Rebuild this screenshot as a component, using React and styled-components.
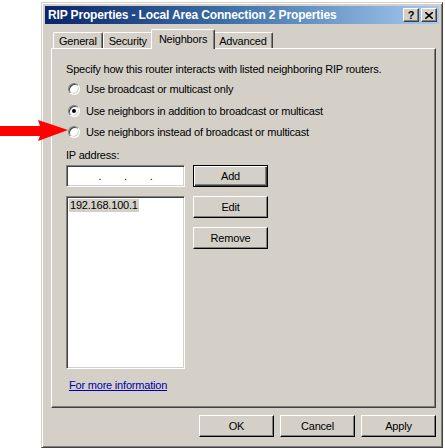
import React from 'react';
import styled, { createGlobalStyle } from 'styled-components';

const GlobalStyle = createGlobalStyle`
  html, body {
    margin: 0;
    padding: 0;
    background: #ffffff;
  }
  body {
    font-family: "Liberation Sans", Arial, sans-serif;
    font-size: 11px;
    letter-spacing: -0.2px;
    color: #000000;
  }
`;

const Page = styled.div`
  position: relative;
  width: 445px;
  height: 448px;
  overflow: hidden;
  padding: 2px 0 0 41px;
  box-sizing: border-box;
`;

const Window = styled.div`
  width: 402px;
  height: 446px;
  box-sizing: border-box;
  background: #d4d0c8;
  border-top: 1px solid #d4d0c8;
  border-left: 1px solid #d4d0c8;
  border-right: 1px solid #404040;
  border-bottom: 1px solid #404040;
  box-shadow: inset 1px 1px 0 #ffffff, inset -1px -1px 0 #808080;
  padding: 3px 3px 0 3px;
  display: flex;
  flex-direction: column;
`;

const TitleBar = styled.div`
  height: 18px;
  display: flex;
  align-items: center;
  justify-content: space-between;
  padding: 0 2px 0 3px;
  background: linear-gradient(90deg, #0a246a 0%, #3a6ea5 45%, #a6caf0 100%);
`;

const Title = styled.span`
  color: #ffffff;
  font-weight: bold;
  font-size: 12px;
  letter-spacing: -0.15px;
  white-space: nowrap;
`;

const TitleButtons = styled.div`
  display: flex;
  gap: 2px;
`;

const CaptionButton = styled.div`
  width: 16px;
  height: 14px;
  box-sizing: border-box;
  background: #d4d0c8;
  border-top: 1px solid #ffffff;
  border-left: 1px solid #ffffff;
  border-right: 1px solid #404040;
  border-bottom: 1px solid #404040;
  box-shadow: inset -1px -1px 0 #808080;
  display: flex;
  align-items: center;
  justify-content: center;
  font-weight: bold;
  font-size: 11px;
  line-height: 1;
`;

const Body = styled.div`
  padding: 5px 5px 0 6px;
  flex: 1;
  display: flex;
  flex-direction: column;
`;

const TabStrip = styled.div`
  display: flex;
  align-items: flex-end;
  height: 19px;
  padding-left: 2px;
  position: relative;
  z-index: 1;
`;

const Tab = styled.div`
  height: ${p => (p.$active ? '20px' : '16px')};
  margin-bottom: ${p => (p.$active ? '-1px' : '0')};
  margin-left: ${p => (p.$active ? '-2px' : '0')};
  margin-right: ${p => (p.$active ? '-2px' : '0')};
  padding: 0 ${p => (p.$active ? '7px' : '5px')};
  box-sizing: border-box;
  background: #d4d0c8;
  border-top: 1px solid #ffffff;
  border-left: 1px solid #ffffff;
  border-right: 1px solid #404040;
  box-shadow: inset -1px 0 0 #808080;
  border-radius: 2px 2px 0 0;
  display: flex;
  align-items: ${p => (p.$active ? 'flex-start' : 'center')};
  padding-top: ${p => (p.$active ? '3px' : '0')};
  white-space: nowrap;
  z-index: ${p => (p.$active ? 2 : 0)};
`;

const Panel = styled.div`
  width: 385px;
  height: 360px;
  box-sizing: border-box;
  border-top: 1px solid #ffffff;
  border-left: 1px solid #ffffff;
  border-right: 1px solid #404040;
  border-bottom: 1px solid #404040;
  box-shadow: inset -1px -1px 0 #808080;
  padding: 13px 14px 0 14px;
  display: flex;
  flex-direction: column;
`;

const Text = styled.div`
  line-height: 14px;
  white-space: nowrap;
`;

const Options = styled.div`
  display: flex;
  flex-direction: column;
  gap: 7.5px;
  margin-top: 6px;
  padding-left: 2px;
`;

const RadioRow = styled.label`
  display: flex;
  align-items: center;
  gap: 6px;
  height: 14px;
  white-space: nowrap;
`;

const RadioCircle = styled.span`
  width: 12px;
  height: 12px;
  box-sizing: border-box;
  border-radius: 50%;
  background: #ffffff;
  border: 1px solid;
  border-color: #808080 #ffffff #ffffff #808080;
  box-shadow: inset 1px 1px 0 #404040, inset -1px -1px 0 #d4d0c8;
  display: flex;
  align-items: center;
  justify-content: center;
  &::after {
    content: '';
    width: 4px;
    height: 4px;
    border-radius: 50%;
    background: ${p => (p.$checked ? '#000000' : 'transparent')};
  }
`;

const Label = styled(Text)`
  margin-top: 9px;
`;

const Grid = styled.div`
  display: grid;
  grid-template-columns: 119px 75px;
  column-gap: 8px;
  row-gap: 9px;
  margin-top: 3px;
  align-items: start;
`;

const Sunken = styled.div`
  box-sizing: border-box;
  background: #ffffff;
  border-top: 1px solid #808080;
  border-left: 1px solid #808080;
  border-right: 1px solid #ffffff;
  border-bottom: 1px solid #ffffff;
  box-shadow: inset 1px 1px 0 #404040, inset -1px -1px 0 #d4d0c8;
`;

const IpInput = styled(Sunken)`
  height: 22px;
  display: flex;
  align-items: center;
  justify-content: space-around;
  padding: 0 20px 0 20px;
`;

const ListBox = styled(Sunken)`
  height: 173px;
  padding: 2px;
  grid-row: span 3;
`;

const ListItem = styled.span`
  display: inline-block;
  background: #d4d0c8;
  line-height: 13px;
  padding: 0 1px;
`;

const ButtonColumn = styled.div`
  display: flex;
  flex-direction: column;
  gap: 9px;
`;

const Button = styled.div`
  width: 75px;
  height: 22px;
  box-sizing: border-box;
  background: #d4d0c8;
  border-top: 1px solid ${p => (p.$default ? '#000000' : '#ffffff')};
  border-left: 1px solid ${p => (p.$default ? '#000000' : '#ffffff')};
  border-right: 1px solid #000000;
  border-bottom: 1px solid #000000;
  box-shadow: ${p =>
    p.$default
      ? 'inset 1px 1px 0 #ffffff, inset -1px -1px 0 #404040, inset -2px -2px 0 #808080'
      : 'inset -1px -1px 0 #808080'};
  display: flex;
  align-items: center;
  justify-content: center;
`;

const Link = styled.a`
  color: #0000aa;
  text-decoration: underline;
  margin-top: auto;
  margin-bottom: 15px;
  margin-left: 3px;
  line-height: 14px;
  align-self: flex-start;
`;

const Footer = styled.div`
  display: flex;
  justify-content: flex-end;
  gap: 6px;
  padding: 7px 0 0 0;
  width: 385px;
`;

const Arrow = styled.svg`
  position: absolute;
  left: 0;
  top: 119px;
`;

export default function App() {
  return (
    <>
      <GlobalStyle />
      <Page>
        <Window>
          <TitleBar>
            <Title>RIP Properties - Local Area Connection 2 Properties</Title>
            <TitleButtons>
              <CaptionButton>?</CaptionButton>
              <CaptionButton>
                <svg width="8" height="7" viewBox="0 0 8 7">
                  <path d="M0 0 L8 7 M8 0 L0 7" stroke="#000" strokeWidth="1.6" />
                </svg>
              </CaptionButton>
            </TitleButtons>
          </TitleBar>
          <Body>
            <TabStrip>
              <Tab>General</Tab>
              <Tab>Security</Tab>
              <Tab $active>Neighbors</Tab>
              <Tab>Advanced</Tab>
            </TabStrip>
            <Panel>
              <Text>Specify how this router interacts with listed neighboring RIP routers.</Text>
              <Options>
                <RadioRow>
                  <RadioCircle />
                  Use broadcast or multicast only
                </RadioRow>
                <RadioRow>
                  <RadioCircle $checked />
                  Use neighbors in addition to broadcast or multicast
                </RadioRow>
                <RadioRow>
                  <RadioCircle />
                  Use neighbors instead of broadcast or multicast
                </RadioRow>
              </Options>
              <Label>IP address:</Label>
              <Grid>
                <IpInput>
                  <span>.</span>
                  <span>.</span>
                  <span>.</span>
                </IpInput>
                <Button $default>Add</Button>
                <ListBox>
                  <ListItem>192.168.100.1</ListItem>
                </ListBox>
                <ButtonColumn>
                  <Button>Edit</Button>
                  <Button>Remove</Button>
                </ButtonColumn>
              </Grid>
              <Link>For more information</Link>
            </Panel>
            <Footer>
              <Button>OK</Button>
              <Button>Cancel</Button>
              <Button>Apply</Button>
            </Footer>
          </Body>
        </Window>
        <Arrow width="70" height="24" viewBox="0 0 70 24">
          <polygon points="0,7 40,7 38,1 68,11 38,22 40,17 0,17" fill="#ff0000" />
        </Arrow>
      </Page>
    </>
  );
}
